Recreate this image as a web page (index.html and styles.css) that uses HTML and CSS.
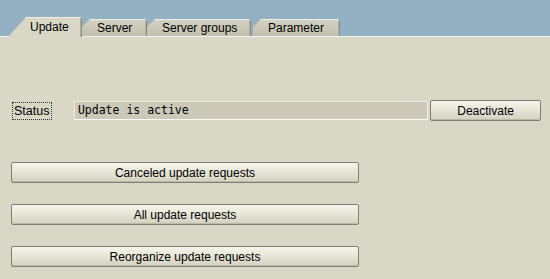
FILE: index.html
```html
<!DOCTYPE html>
<html>
<head>
<meta charset="utf-8">
<link rel="stylesheet" href="styles.css">
</head>
<body>
<div class="header">
  <div class="tabs">
    <div class="tab active">Update</div>
    <div class="tab t-server">Server</div>
    <div class="tab t-groups">Server groups</div>
    <div class="tab t-param">Parameter</div>
  </div>
</div>
<div class="content">
  <div class="status-row">
    <span class="label">Status</span>
    <div class="field">Update is active</div>
    <button class="btn btn-deact">Deactivate</button>
  </div>
  <div class="actions">
    <button class="btn btn-wide">Canceled update requests</button>
    <button class="btn btn-wide">All update requests</button>
    <button class="btn btn-wide">Reorganize update requests</button>
  </div>
</div>
</body>
</html>
```

FILE: styles.css
```css
* { box-sizing: border-box; }
html, body { margin: 0; padding: 0; }
body {
  width: 550px;
  height: 279px;
  overflow: hidden;
  background: #d9d7c6;
  font-family: "Liberation Sans", Arial, sans-serif;
  font-size: 12px;
  color: #000;
}
.header {
  height: 37px;
  background: #94b0c3;
  border-bottom: 1px solid #f3f2ea;
  position: relative;
}
.tabs {
  display: flex;
  align-items: flex-end;
  height: 100%;
  padding-left: 8px;
}
.tab {
  height: 17px;
  line-height: 16px;
  background: linear-gradient(#d3d1c1, #c2c0af);
  box-shadow: inset -1px 0 0 #8c8a7e, inset -2px 0 0 #b3b1a2;
  clip-path: polygon(0 8px, 8px 0, calc(100% - 2px) 0, 100% 2px, 100% 100%, 0 100%);
  border-top: 1px solid #f0efe6;
  text-align: left;
  white-space: nowrap;
}
.tab.active {
  height: 20px;
  margin-bottom: -1px;
  background: #d9d7c6;
  box-shadow: inset -1px 0 0 #8c8a7e, inset -2px 0 0 #b3b1a2;
  clip-path: polygon(0 100%, 18px 0, calc(100% - 2px) 0, 100% 2px, 100% 100%);
  width: 74px;
  padding-left: 22px;
  line-height: 18px;
  position: relative;
  z-index: 2;
}
.t-server { width: 65px; padding-left: 15px; }
.t-groups { width: 104px; padding-left: 15px; }
.t-param { width: 87px; padding-left: 15px; margin-left: 2px; }

.content {
  padding: 63px 9px 0 11px;
}
.status-row {
  display: flex;
  align-items: center;
  height: 21px;
}
.label {
  margin-left: 1px;
  border: 1px dotted #333;
  height: 18px;
  line-height: 17px;
  padding: 0 1px;
  width: 40px;
  font-size: 12.5px;
}
.field {
  margin-left: 22px;
  width: 355px;
  height: 19px;
  background: #ccc9b9;
  border: 1px solid #eeede2;
  border-bottom-color: #fbfbf6;
  font-family: "DejaVu Sans Mono", "Liberation Mono", monospace;
  font-size: 11.5px;
  line-height: 17px;
  padding-left: 3px;
}
.btn {
  font-family: "Liberation Sans", Arial, sans-serif;
  font-size: 12px;
  color: #000;
  height: 21px;
  padding: 0;
  border: 1px solid #807e74;
  border-radius: 2px;
  background: linear-gradient(#f6f5ec 0%, #e6e4d6 50%, #d2d0bf 100%);
  box-shadow: inset 0 -1px 0 #bcb9a8;
  text-align: center;
  line-height: 18px;
}
.btn-deact {
  margin-left: 2px;
  width: 111px;
}
.actions {
  display: flex;
  flex-direction: column;
  gap: 21px;
  margin-top: 41px;
}
.btn-wide {
  width: 348px;
}
```
